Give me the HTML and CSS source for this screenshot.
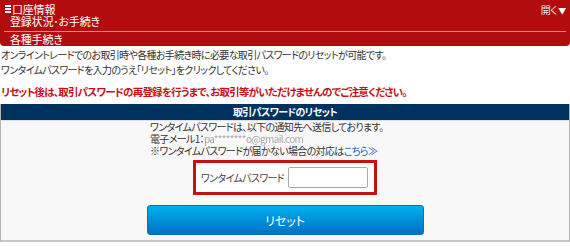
FILE: index.html
```html
<!DOCTYPE html>
<html lang="ja">
<head>
    <meta charset="UTF-8">
    <title>取引パスワードのリセット</title>
    <link rel="stylesheet" href="styles.css">
</head>
<body>

    <!-- Header bar -->
    <div class="top-bar">
        <div class="top-row">
            <div class="crumbs">
                <div class="crumb"><span class="menu-icon"><i></i><i></i><i></i></span>口座情報</div>
                <div class="crumb">登録状況･お手続き</div>
            </div>
            <span class="toggle">開く<span class="arrow">▼</span></span>
        </div>
        <div class="sub-title">各種手続き</div>
    </div>

    <!-- Intro text -->
    <div class="intro">
        <p>オンライントレードでのお取引時や各種お手続き時に必要な取引パスワードのリセットが可能です。<br>
        ワンタイムパスワードを入力のうえ「リセット」をクリックしてください。</p>
        <p class="warning">リセット後は、取引パスワードの再登録を行うまで、お取引等がいただけませんのでご注意ください。</p>
    </div>

    <!-- Reset panel -->
    <div class="panel">
        <div class="panel-head">取引パスワードのリセット</div>
        <div class="panel-body">
            <div class="notice">
                ワンタイムパスワードは、以下の通知先へ送信しております。<br>
                電子メール1：<span class="masked">pa********o@gmail.com</span><br>
                ※ワンタイムパスワードが届かない場合の対応は<a href="#">こちら≫</a>
            </div>
            <div class="otp-box">
                <label for="otp">ワンタイムパスワード</label>
                <input type="text" id="otp" name="otp">
            </div>
            <button type="button" class="reset-btn">リセット</button>
        </div>
    </div>

</body>
</html>
```

FILE: styles.css
```css
body {
    font-family: "Noto Sans CJK JP", "Liberation Sans", sans-serif;
    font-size: 10px;
    letter-spacing: -0.65px;
    font-feature-settings: "palt";
    color: #333;
    background-color: #fff;
    margin: 0;
    padding: 0;
}

/* Header bar */
.top-bar {
    background-color: #b30c0e; /* Dark red */
    color: #fff;
    font-size: 11px;
    letter-spacing: -0.2px;
    border-radius: 0 0 4px 4px;
    padding: 3px 4px 0 4px;
    height: 46px;
    box-sizing: border-box;
}

.top-row {
    display: flex;
    justify-content: space-between;
    border-bottom: 1px solid #e48a8a;
    height: 28px;
}

.crumb {
    display: flex;
    align-items: center;
    height: 12px;
    line-height: 12px;
    padding-left: 6px;
}

.menu-icon {
    display: flex;
    flex-direction: column;
    justify-content: space-between;
    width: 6px;
    height: 8px;
    margin-left: -5px;
    margin-right: 1px;
}

.menu-icon i {
    display: block;
    height: 2px;
    background-color: #fff;
}

.toggle {
    font-size: 10px;
    line-height: 12px;
    padding-top: 1px;
    color: #f4dede;
}

.arrow {
    font-size: 8px;
    color: #fff;
    margin-left: 1px;
}

.sub-title {
    line-height: 12px;
    height: 12px;
    padding: 1px 0 0 6px;
}

/* Intro text */
.intro {
    padding: 0 1px;
}

.intro p {
    margin: 1px 0 0 0;
    line-height: 15px;
}

.intro .warning {
    color: #c8101a; /* Red warning */
    font-weight: bold;
    font-size: 10.5px;
    letter-spacing: -0.8px;
    margin-top: 7px;
}

/* Reset panel */
.panel {
    margin-top: 5px;
    border: 1px solid #b4b4b4;
    border-top: none;
    border-bottom: 2px solid #c8c8c8;
}

.panel-head {
    background-color: #00325f; /* Navy */
    color: #fff;
    font-weight: bold;
    text-align: center;
    line-height: 16px;
    border-bottom: 1px solid #e0e0e0;
}

.panel-body {
    background-color: #f8f8f8;
    display: flex;
    flex-direction: column;
    align-items: center;
    padding: 0 0 5px 0;
}

.notice {
    line-height: 12px;
    align-self: flex-start;
    margin-left: 149px;
}

.masked {
    display: inline-block;
    color: #a8a8a8;
    filter: blur(0.7px);
}

.notice a {
    color: #1a5fc8;
    text-decoration: none;
}

.otp-box {
    margin-top: 3px;
    border: 3px solid #c3130f;
    background-color: #fff;
    width: 184px;
    height: 35px;
    box-sizing: border-box;
    display: flex;
    align-items: center;
    justify-content: flex-end;
    gap: 4px;
    padding-right: 6px;
}

.otp-box label {
    color: #444;
    white-space: nowrap;
}

.otp-box input {
    width: 80px;
    height: 21px;
    padding: 0;
    border: 1px solid #aaa;
    border-radius: 2px;
    box-sizing: border-box;
}

.reset-btn {
    margin-top: 10px;
    width: 277px;
    height: 30px;
    border: 1px solid #0a70b8;
    border-radius: 3px;
    background: linear-gradient(#00b0f0, #0070c4);
    color: #fff;
    font-family: inherit;
    font-size: 12px;
    font-feature-settings: "palt";
    cursor: pointer;
}
```
